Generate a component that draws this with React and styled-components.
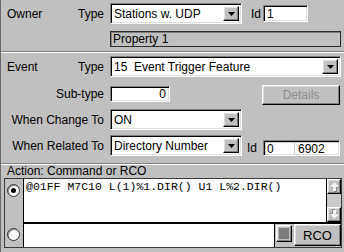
import React from "react";
import styled, { css, createGlobalStyle } from "styled-components";

const Global = createGlobalStyle`
  html, body { margin: 0; padding: 0; background: #c0c0c0; }
  #root { width: 344px; height: 252px; }
`;

const sunken = css`
  box-sizing: border-box;
  border: 1px solid;
  border-color: #808080 #ffffff #ffffff #808080;
  box-shadow: inset 1px 1px #000, inset -1px -1px #dfdfdf;
`;

const raised = css`
  box-sizing: border-box;
  border: 1px solid;
  border-color: #ffffff #000 #000 #ffffff;
  box-shadow: inset -1px -1px #808080, inset 1px 1px #dfdfdf;
  background: #c0c0c0;
`;

const Frame = styled.div`
  width: 344px;
  height: 252px;
  box-sizing: border-box;
  background: #c0c0c0;
  border-left: 1px solid #6a6a6a;
  display: flex;
  flex-direction: column;
  font-family: "Liberation Sans", Arial, sans-serif;
  font-size: 12px;
  color: #000;
  overflow: hidden;
`;

const Section = styled.div`
  display: flex;
  flex-direction: column;
  padding-top: ${(p) => p.$pt || 0}px;
  padding-bottom: ${(p) => p.$pb || 0}px;
`;

const Separator = styled.div`
  height: 0;
  border-top: 1px solid #808080;
  border-bottom: 1px solid #ffffff;
`;

const Row = styled.div`
  display: flex;
  align-items: ${(p) => p.$align || "center"};
  height: ${(p) => p.$h}px;
  margin-top: ${(p) => p.$mt || 0}px;
`;

const LabelCell = styled.div`
  width: 103px;
  flex: none;
  box-sizing: border-box;
  padding-left: 6px;
  margin-right: 6px;
  display: flex;
  justify-content: ${(p) => (p.$split ? "space-between" : "flex-end")};
  align-items: center;
  white-space: nowrap;
  height: ${(p) => (p.$h ? `${p.$h}px` : "auto")};
  margin-top: ${(p) => p.$mt || 0}px;
`;

const Combo = styled.div`
  ${sunken};
  width: ${(p) => p.$w}px;
  height: 21px;
  flex: none;
  background: #fff;
  display: flex;
  padding: 2px;
`;

const ComboText = styled.div`
  flex: 1;
  padding-left: 1px;
  display: flex;
  align-items: center;
  white-space: pre;
  overflow: hidden;
`;

const DropButton = styled.div`
  ${raised};
  width: 16px;
  flex: none;
  display: flex;
  align-items: center;
  justify-content: center;
`;

const IdLabel = styled.div`
  width: 21px;
  flex: none;
  box-sizing: border-box;
  padding-left: ${(p) => p.$pl || 9}px;
  align-self: ${(p) => p.$self || "center"};
  line-height: 16px;
`;

const TextField = styled.div`
  ${sunken};
  width: ${(p) => p.$w}px;
  height: ${(p) => p.$h || 16}px;
  flex: none;
  background: #fff;
  display: flex;
  align-items: center;
  justify-content: ${(p) => (p.$right ? "flex-end" : "flex-start")};
  padding: 0 3px 0 3px;
  margin-top: ${(p) => p.$mt || 0}px;
  align-self: ${(p) => p.$self || "auto"};
`;

const ReadOnlyField = styled.div`
  box-sizing: border-box;
  width: 231px;
  height: 16px;
  border: 1px solid #2c2c2c;
  box-shadow: inset 1px 1px #808080;
  background: #c0c0c0;
  display: flex;
  align-items: center;
  padding-left: 2px;
`;

const SplitField = styled.div`
  ${sunken};
  width: ${(p) => p.$w}px;
  height: 16px;
  flex: none;
  align-self: flex-end;
  background: #c8c8c8;
  display: flex;
  gap: 1px;
  padding: 2px 1px 1px 2px;
`;

const SplitCell = styled.div`
  background: #fff;
  flex: ${(p) => p.$grow};
  display: flex;
  align-items: center;
  padding-left: ${(p) => p.$pl}px;
`;

const Spacer = styled.div`
  flex: 1;
`;

const PushButton = styled.div`
  ${raised};
  width: ${(p) => p.$w}px;
  height: ${(p) => p.$h}px;
  flex: none;
  display: flex;
  align-items: center;
  justify-content: center;
  color: ${(p) => (p.$disabled ? "#8c8c8c" : "#000")};
  margin-right: ${(p) => p.$mr || 0}px;
  font-size: ${(p) => p.$fs || 12}px;
`;

const ActionLabel = styled.div`
  height: 13px;
  line-height: 13px;
  padding-left: 6px;
`;

const Box = styled.div`
  margin-left: 3px;
  width: 338px;
  height: 70px;
  box-sizing: border-box;
  border: 1px solid #3a3a3a;
  display: flex;
`;

const RadioCol = styled.div`
  width: 19px;
  flex: none;
  box-sizing: border-box;
  border-right: 1px solid #000;
  display: flex;
  flex-direction: column;
  padding: 5px 0 0 2px;
  gap: 31px;
`;

const Radio = styled.div`
  width: 13px;
  height: 13px;
  box-sizing: border-box;
  border-radius: 50%;
  background: #fff;
  border: 1px solid #303030;
  box-shadow: inset 1px 1px #909090;
  display: flex;
  align-items: center;
  justify-content: center;
  &::after {
    content: "";
    width: 5px;
    height: 5px;
    border-radius: 50%;
    background: #000;
    display: ${(p) => (p.$checked ? "block" : "none")};
  }
`;

const RightCol = styled.div`
  flex: 1;
  display: flex;
  flex-direction: column;
`;

const TopArea = styled.div`
  height: 45px;
  box-sizing: border-box;
  border-bottom: 2px solid #000;
  display: flex;
`;

const CodeText = styled.div`
  flex: 1;
  background: #fff;
  font-family: "Liberation Mono", "Courier New", monospace;
  font-size: 11.5px;
  line-height: 13px;
  padding: 1px 0 0 2px;
  white-space: pre;
  overflow: hidden;
`;

const ScrollBar = styled.div`
  width: 15px;
  flex: none;
  display: flex;
  flex-direction: column;
  background: #cacaca;
  border-left: 1px solid #000;
  box-sizing: border-box;
`;

const ScrollBtn = styled.div`
  ${raised};
  height: 15px;
  display: flex;
  align-items: center;
  justify-content: center;
`;

const BottomRow = styled.div`
  flex: 1;
  display: flex;
  align-items: flex-start;
`;

const LineInput = styled.div`
  flex: 1;
  align-self: stretch;
  background: #fff;
  border-right: 1px solid #000;
`;

const SquareBtn = styled.div`
  ${raised};
  width: 16px;
  height: 17px;
  margin: 1px 2px 0 1px;
  padding: 2px;
  &::after {
    content: "";
    display: block;
    width: 100%;
    height: 100%;
    background: #7c7c7c;
  }
`;

const Arrow = () => (
  <svg width="7" height="4" viewBox="0 0 7 4">
    <polygon points="0,0 7,0 3.5,4" fill="#000" />
  </svg>
);

const ScrollArrow = ({ down }) => (
  <svg
    width="11"
    height="11"
    viewBox="0 0 11 11"
    style={down ? { transform: "rotate(180deg)" } : undefined}
  >
    <polygon points="6,2 11,7 8,7 8,11 5,11 5,7 2,7" fill="#8a8a8a" />
    <polygon points="5.5,1 10,6 7,6 7,10 4,10 4,6 1,6" fill="#f2f2f2" />
  </svg>
);

export default function App() {
  return (
    <>
      <Global />
      <Frame>
        <Section $pt={3} $pb={4}>
          <Row $h={21}>
            <LabelCell $split>
              <span>Owner</span>
              <span>Type</span>
            </LabelCell>
            <Combo $w={132}>
              <ComboText>Stations w. UDP</ComboText>
              <DropButton>
                <Arrow />
              </DropButton>
            </Combo>
            <IdLabel>Id</IdLabel>
            <TextField $w={45} $h={17}>1</TextField>
          </Row>
          <Row $h={16} $mt={7}>
            <LabelCell />
            <ReadOnlyField>Property 1</ReadOnlyField>
          </Row>
        </Section>
        <Separator />
        <Section $pb={7}>
          <Row $h={21} $mt={3}>
            <LabelCell $split>
              <span>Event</span>
              <span>Type</span>
            </LabelCell>
            <Combo $w={231}>
              <ComboText>{"15  Event Trigger Feature"}</ComboText>
              <DropButton>
                <Arrow />
              </DropButton>
            </Combo>
          </Row>
          <Row $h={20} $mt={8} $align="flex-start">
            <LabelCell $h={16} $mt={1}>Sub-type</LabelCell>
            <TextField $w={60} $right $mt={1}>0</TextField>
            <Spacer />
            <PushButton $w={78} $h={20} $mr={4} $disabled>
              Details
            </PushButton>
          </Row>
          <Row $h={21} $mt={4}>
            <LabelCell>When Change To</LabelCell>
            <Combo $w={132}>
              <ComboText>ON</ComboText>
              <DropButton>
                <Arrow />
              </DropButton>
            </Combo>
          </Row>
          <Row $h={21} $mt={5}>
            <LabelCell>When Related To</LabelCell>
            <Combo $w={132}>
              <ComboText>Directory Number</ComboText>
              <DropButton>
                <Arrow />
              </DropButton>
            </Combo>
            <IdLabel $pl={5} $self="flex-end">Id</IdLabel>
            <SplitField $w={77}>
              <SplitCell $grow="0 0 27px" $pl={1}>0</SplitCell>
              <SplitCell $grow="1" $pl={3}>6902</SplitCell>
            </SplitField>
          </Row>
        </Section>
        <Separator />
        <Section>
          <ActionLabel>Action: Command or RCO</ActionLabel>
          <Box>
            <RadioCol>
              <Radio $checked />
              <Radio />
            </RadioCol>
            <RightCol>
              <TopArea>
                <CodeText>@01FF M7C10 L(1)%1.DIR() U1 L%2.DIR()</CodeText>
                <ScrollBar>
                  <ScrollBtn>
                    <ScrollArrow />
                  </ScrollBtn>
                  <Spacer />
                  <ScrollBtn>
                    <ScrollArrow down />
                  </ScrollBtn>
                </ScrollBar>
              </TopArea>
              <BottomRow>
                <LineInput />
                <SquareBtn />
                <PushButton $w={47} $h={22} $fs={13}>
                  RCO
                </PushButton>
              </BottomRow>
            </RightCol>
          </Box>
        </Section>
      </Frame>
    </>
  );
}
